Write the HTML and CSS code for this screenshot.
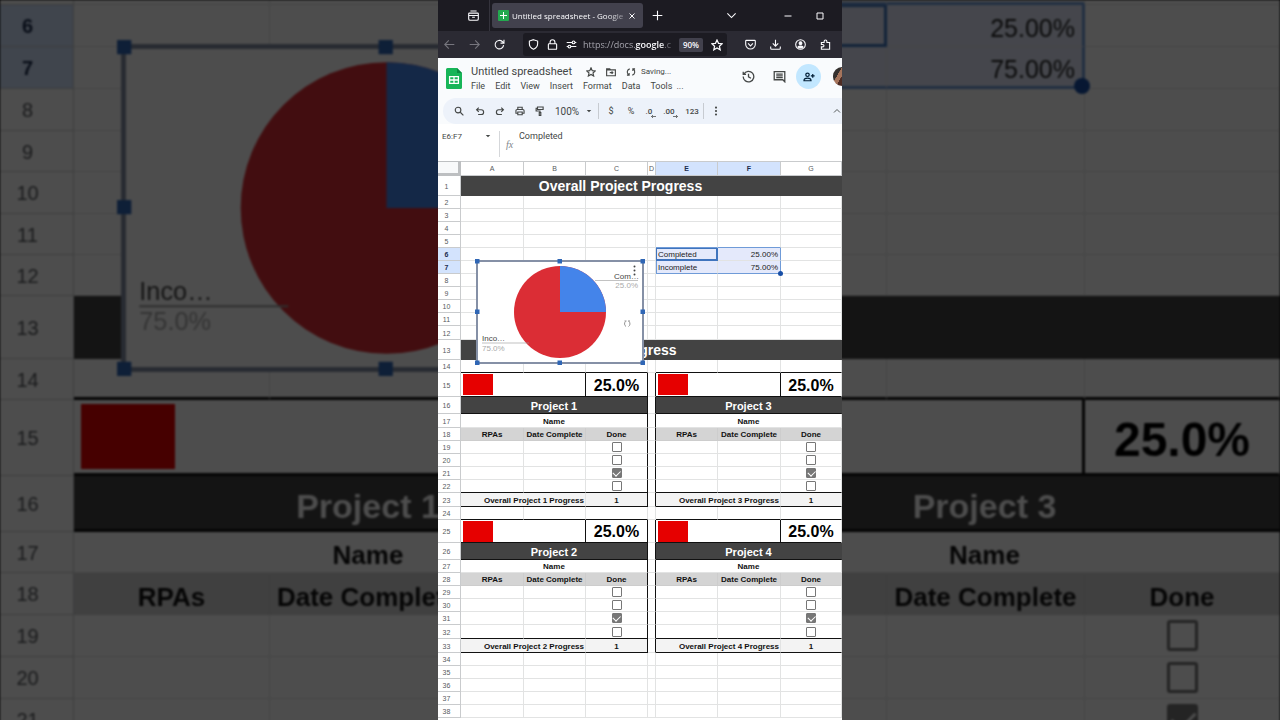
FILE: index.html
```html
<!DOCTYPE html>
<html lang="en">
<head>
<meta charset="utf-8">
<meta name="viewport" content="width=device-width, initial-scale=1">
<title>Untitled spreadsheet - Google Sheets</title>
<link rel="stylesheet" href="styles.css">
</head>
<body>
<svg class="defs" aria-hidden="true">
  <symbol id="i-archive" viewBox="0 0 16 16"><path d="M3.5 1.500h9M2 4.500h12a1 1 0 0 1 1 1V13a2 2 0 0 1-2 2H3a2 2 0 0 1-2-2V5.500a1 1 0 0 1 1-1zM1 8h14M6 10.500h4"/></symbol>
  <symbol id="i-close" viewBox="0 0 16 16"><path d="M3 3l10 10M13 3L3 13"/></symbol>
  <symbol id="i-plus" viewBox="0 0 16 16"><path d="M8 1v14M1 8h14"/></symbol>
  <symbol id="i-down" viewBox="0 0 16 16"><path d="M2 5l6 6 6-6"/></symbol>
  <symbol id="i-up" viewBox="0 0 16 16"><path d="M2 11l6-6 6 6"/></symbol>
  <symbol id="i-min" viewBox="0 0 16 16"><path d="M1 8h14"/></symbol>
  <symbol id="i-max" viewBox="0 0 16 16"><path d="M2 2h12v12H2z"/></symbol>
  <symbol id="i-back" viewBox="0 0 16 16"><path d="M15 8H1M7 2L1 8l6 6"/></symbol>
  <symbol id="i-fwd" viewBox="0 0 16 16"><path d="M1 8h14M9 2l6 6-6 6"/></symbol>
  <symbol id="i-reload" viewBox="0 0 16 16"><path d="M14 9a6.200 6.200 0 1 1-2-5.400L14 5.500M14.500 1v5h-5"/></symbol>
  <symbol id="i-shield" viewBox="0 0 16 16"><path d="M8 1l6 2v4c0 4-2.500 6.500-6 8-3.500-1.500-6-4-6-8V3z"/></symbol>
  <symbol id="i-lock" viewBox="0 0 16 16"><path d="M3 7h10a1 1 0 0 1 1 1v6a1 1 0 0 1-1 1H3a1 1 0 0 1-1-1V8a1 1 0 0 1 1-1zM4.500 7V4.500a3.500 3.500 0 0 1 7 0V7"/></symbol>
  <symbol id="i-perm" viewBox="0 0 16 16"><path d="M1 5h8M13 5h2M1 11h2M7 11h8"/><circle cx="11" cy="5" r="2"/><circle cx="5" cy="11" r="2"/></symbol>
  <symbol id="i-star" viewBox="0 0 16 16"><path d="M8 1.300l2 4.500 4.900.500-3.700 3.300 1.100 4.900L8 12l-4.300 2.500 1.100-4.900L1.100 6.300 6 5.800z"/></symbol>
  <symbol id="i-pocket" viewBox="0 0 16 16"><path d="M2 2h12a1 1 0 0 1 1 1v4.500a7 7 0 0 1-14 0V3a1 1 0 0 1 1-1zM4.500 6.500L8 10l3.500-3.500"/></symbol>
  <symbol id="i-download" viewBox="0 0 16 16"><path d="M8 1v9M4 6.500L8 10.500l4-4M1 11v2.500A1.500 1.500 0 0 0 2.500 15h11a1.500 1.500 0 0 0 1.500-1.500V11"/></symbol>
  <symbol id="i-account" viewBox="0 0 16 16"><circle cx="8" cy="8" r="7"/><circle cx="8" cy="6" r="2" fill="currentColor"/><path fill="currentColor" d="M4.500 11.500c1-1.600 6-1.600 7 0C10 13.500 6 13.500 4.500 11.500z"/></symbol>
  <symbol id="i-puzzle" viewBox="0 0 16 16"><path d="M2 5h4V3.500a2 2 0 0 1 4 0V5h4v10H2v-3.500h2a1.500 1.500 0 0 0 0-3.500H2z"/></symbol>
  <symbol id="i-sheets" viewBox="0 0 16 21"><path fill="#17b558" stroke="none" d="M1.500 0H11l5 5v14.500a1.500 1.500 0 0 1-1.500 1.500h-13A1.500 1.500 0 0 1 0 19.500v-18A1.500 1.500 0 0 1 1.500 0z"/><path fill="#0b8a42" stroke="none" d="M11 0l5 5h-5z"/><path stroke="#fff" fill="none" stroke-width="1.300" d="M3.600 8.600h8.800v6.800H3.600zM3.600 12h8.800M8 8.600v6.800"/></symbol>
  <symbol id="i-folder" viewBox="0 0 16 16"><path d="M1 3h5l1.500 1.500H15V14H1zM1 4.500h7M6 9h5M9 7l2 2-2 2"/></symbol>
  <symbol id="i-sync" viewBox="0 0 16 16"><path d="M6 3a5.500 5.500 0 0 0-2 9.500M1.500 13H5V9.500M10 13a5.500 5.500 0 0 0 2-9.500M14.500 3H11v3.500"/></symbol>
  <symbol id="i-history" viewBox="0 0 16 16"><path d="M2.300 5A6.500 6.500 0 1 1 1.500 8M1.500 2v3.500H5M8 4.500V8.500l3 1.700"/></symbol>
  <symbol id="i-comment" viewBox="0 0 16 16"><path d="M1.500 2h13v12.500L12 12H1.500zM4 5h8M4 7.200h8M4 9.400h8"/></symbol>
  <symbol id="i-share" viewBox="0 0 16 16"><circle cx="6" cy="5" r="2.300"/><path d="M1.300 13c0-4.500 9.400-4.500 9.400 0zM13 4v5M10.500 6.500h5"/></symbol>
  <symbol id="i-search" viewBox="0 0 16 16"><circle cx="6.500" cy="6.500" r="4.500"/><path d="M10 10l5 5"/></symbol>
  <symbol id="i-undo" viewBox="0 0 16 16"><path d="M6 2.500L2.500 6 6 9.500M2.500 6H10a3.800 3.800 0 0 1 0 7.600H5"/></symbol>
  <symbol id="i-redo" viewBox="0 0 16 16"><path d="M10 2.500L13.500 6 10 9.500M13.500 6H6a3.800 3.800 0 0 0 0 7.600h5"/></symbol>
  <symbol id="i-print" viewBox="0 0 16 16"><path d="M4.500 5.500V2h7v3.500M4.500 11.500h-3v-4a2 2 0 0 1 2-2h9a2 2 0 0 1 2 2v4h-3M4.500 9.500h7V14h-7z"/></symbol>
  <symbol id="i-paint" viewBox="0 0 16 16"><path d="M4 1.500h9v4H4zM4 3.500H1.800V8H8v2.500M6.800 10.500h2.500V15H6.800z"/></symbol>
  <symbol id="i-caret" viewBox="0 0 16 16"><path fill="currentColor" stroke="none" d="M2 5h12l-6 6z"/></symbol>
  <symbol id="i-more" viewBox="0 0 16 16"><g fill="currentColor" stroke="none"><circle cx="8" cy="2.500" r="1.700"/><circle cx="8" cy="8" r="1.700"/><circle cx="8" cy="13.500" r="1.700"/></g></symbol>
  <symbol id="chart" viewBox="0 0 170 106">
    <rect x="2" y="2" width="166" height="102" fill="#fff" stroke="#8590a6" shape-rendering="crispEdges"/>
    <circle cx="85" cy="53" r="46" fill="#db2d35"/>
    <path d="M85 53V7a46 46 0 0 1 46 46z" fill="#4484ea"/>
    <g stroke="#999" fill="none" stroke-width=".6"><path d="M120 21.500h43M7 84h47"/></g>
    <g font-family="'Liberation Sans', Arial, sans-serif" font-size="8">
      <text x="139" y="19.500" fill="#444">Com…</text><text x="163" y="29" fill="#aaa" text-anchor="end">25.0%</text>
      <text x="7" y="82" fill="#444">Inco…</text><text x="7" y="91.500" fill="#aaa">75.0%</text>
    </g>
    <g fill="#444"><circle cx="159.500" cy="7.500" r="1"/><circle cx="159.500" cy="11.500" r="1"/><circle cx="159.500" cy="15.500" r="1"/></g>
    <path d="M151 67.500a3.200 3.200 0 0 1-.5-5M153.500 67.500a3.200 3.200 0 0 0 .5-5M149.500 62h2M153 62h2" fill="none" stroke="#777" stroke-width=".8"/>
    <path fill="#2f66b5" d="M0 0h4.500v4.500H0zM82.500 0H87v4.500h-4.500zM165.500 0h4.500v4.500h-4.500zM0 50.500h4.500V55H0zM165.500 50.500h4.500V55h-4.500zM0 101.500h4.500v4.500H0zM82.500 101.500H87v4.500h-4.500zM165.500 101.500h4.500v4.500h-4.500z"/>
  </symbol>
</svg>

<div class="stage">
  <div class="backdrop" aria-hidden="true">
    <div class="sheet sheet-large">
      <table class="grid" data-first="5" data-last="21" data-scale="large"></table>
      <svg class="chart"><use href="#chart"/></svg>
    </div>
  </div>

  <main class="phone">
    <div class="tabs">
      <button class="icon tabs-archive" aria-label="Recent browsing"><svg><use href="#i-archive"/></svg></button>
      <div class="tab">
        <span class="favicon"></span>
        <span class="tab-title">Untitled spreadsheet - Google</span>
        <button class="icon small" aria-label="Close tab"><svg><use href="#i-close"/></svg></button>
      </div>
      <button class="icon" aria-label="New tab"><svg><use href="#i-plus"/></svg></button>
      <div class="window-buttons">
        <button class="icon list-tabs" aria-label="List all tabs"><svg><use href="#i-down"/></svg></button>
        <button class="icon small" aria-label="Minimize"><svg><use href="#i-min"/></svg></button>
        <button class="icon small" aria-label="Maximize"><svg><use href="#i-max"/></svg></button>
      </div>
    </div>

    <div class="nav">
      <button class="icon dim" aria-label="Back"><svg><use href="#i-back"/></svg></button>
      <button class="icon dim" aria-label="Forward"><svg><use href="#i-fwd"/></svg></button>
      <button class="icon" aria-label="Reload"><svg><use href="#i-reload"/></svg></button>
      <div class="address">
        <svg><use href="#i-shield"/></svg>
        <svg><use href="#i-lock"/></svg>
        <svg><use href="#i-perm"/></svg>
        <span class="url">https://docs.<b>google</b>.c</span>
        <button class="zoom-level">90%</button>
        <svg class="star"><use href="#i-star"/></svg>
      </div>
      <div class="nav-tools">
        <button class="icon" aria-label="Pocket"><svg><use href="#i-pocket"/></svg></button>
        <button class="icon" aria-label="Downloads"><svg><use href="#i-download"/></svg></button>
        <button class="icon" aria-label="Account"><svg><use href="#i-account"/></svg></button>
        <button class="icon" aria-label="Extensions"><svg><use href="#i-puzzle"/></svg></button>
      </div>
    </div>

    <header class="doc">
      <svg class="doc-logo" viewBox="0 0 16 21"><use href="#i-sheets"/></svg>
      <div class="doc-info">
        <div class="doc-title">
          <h1>Untitled spreadsheet</h1>
          <svg><use href="#i-star"/></svg>
          <svg><use href="#i-folder"/></svg>
          <svg><use href="#i-sync"/></svg>
          <span>Saving...</span>
        </div>
        <nav class="menu">
          <button>File</button><button>Edit</button><button>View</button><button>Insert</button><button>Format</button><button>Data</button><button>Tools</button><button class="menu-more">...</button>
        </nav>
      </div>
      <div class="doc-actions">
        <button class="icon" aria-label="Version history"><svg><use href="#i-history"/></svg></button>
        <button class="icon" aria-label="Comments"><svg><use href="#i-comment"/></svg></button>
        <button class="share" aria-label="Share"><svg><use href="#i-share"/></svg></button>
        <span class="avatar"></span>
      </div>
    </header>

    <div class="toolbar">
      <button aria-label="Search" class="search"><svg><use href="#i-search"/></svg></button>
      <button aria-label="Undo"><svg><use href="#i-undo"/></svg></button>
      <button aria-label="Redo"><svg><use href="#i-redo"/></svg></button>
      <button aria-label="Print"><svg><use href="#i-print"/></svg></button>
      <button aria-label="Paint format"><svg><use href="#i-paint"/></svg></button>
      <button class="zoom-menu">100% <svg class="caret"><use href="#i-caret"/></svg></button>
      <button>$</button>
      <button>%</button>
      <button class="decimals">.0<svg viewBox="0 0 8 6"><path d="M8 3H2M4 1L2 3l2 2"/></svg></button>
      <button class="decimals">.00<svg viewBox="0 0 8 6"><path d="M0 3h6M4 1l2 2-2 2"/></svg></button>
      <button class="formats">123</button>
      <button class="more" aria-label="More"><svg><use href="#i-more"/></svg></button>
      <button class="collapse" aria-label="Hide menus"><svg><use href="#i-up"/></svg></button>
    </div>

    <div class="formula">
      <button class="name-box">E6:F7 <svg class="caret"><use href="#i-caret"/></svg></button>
      <span class="fx">fx</span>
      <input type="text" value="Completed" aria-label="Formula">
    </div>

    <div class="sheet">
      <table class="grid" data-first="1" data-last="38" data-scale="small" data-header></table>
      <svg class="chart" role="img" aria-label="Completed 25.0%, Incomplete 75.0%"><use href="#chart"/></svg>
    </div>
  </main>
</div>
<script src="app.js"></script>
</body>
</html>
```
FILE: styles.css
```css
* { box-sizing: border-box; }
body { margin: 0; background: #000; font-family: Roboto, "Liberation Sans", sans-serif; }
button, input { font: inherit; color: inherit; border: 0; padding: 0; margin: 0; background: none; }
svg { fill: none; stroke: currentColor; stroke-width: 1.6; flex: none; }
h1 { margin: 0; font-weight: 400; }
.defs { position: absolute; width: 0; height: 0; }

.stage { display: grid; height: 100vh; overflow: hidden; background: #000; }
.backdrop, .phone { grid-area: 1 / 1; min-height: 0; overflow: hidden; }
.backdrop .sheet { opacity: .3; filter: blur(1px); }
.phone {
  position: relative; justify-self: center; height: 100vh; aspect-ratio: 101 / 180;
  display: flex; flex-direction: column; background: linear-gradient(#f9fbfd 124px, #fff 124px);
}

/* Browser chrome */
.icon { display: grid; place-items: center; width: 20px; height: 20px; }
.icon svg { width: 11px; height: 11px; }
.icon.small svg { width: 8px; height: 8px; stroke-width: 2; }
.tabs {
  flex: none; display: flex; align-items: center; height: 31px;
  background: #1c1b22; color: #fbfbfe; font: 8px "Open Sans", sans-serif;
}
.tabs-archive { width: 52px; height: 31px; padding-left: 20px; border-right: 1px solid #34333c; }
.tab {
  display: flex; align-items: center; width: 151px; height: 25px; margin: 0 4px 0 2px;
  padding-left: 6px; border-radius: 3px; background: #42414d;
}
.favicon {
  width: 11px; height: 11px; margin-right: 3px; border-radius: 1px;
  background:
    linear-gradient(#fff, #fff) center / 7px 1px no-repeat,
    linear-gradient(#fff, #fff) center / 1px 7px no-repeat, #23a94f;
}
.tab-title {
  flex: 1; overflow: hidden; white-space: nowrap;
  mask-image: linear-gradient(90deg, #000 85%, #0006);
}
.tab .icon { width: 18px; margin-right: 2px; }
.window-buttons { display: flex; margin-left: auto; padding-right: 12px; gap: 12px; }
.list-tabs { margin-right: 25px; }

.nav {
  flex: none; display: flex; align-items: center; height: 27px; gap: 5px; padding-left: 1px;
  background: #2b2a33; color: #fbfbfe; font: 9px "Open Sans", sans-serif;
}
.nav .dim { color: #77767e; }
.address {
  display: flex; align-items: center; gap: 8px; width: 204px; height: 23px; margin-left: 9px;
  padding-left: 5px; border-radius: 3px; background: #1c1b22;
}
.address svg { width: 11px; height: 11px; }
.url {
  flex: 1; margin: 0 -3px 0 -2px; overflow: hidden; white-space: nowrap; color: #a5a4ad;
  mask-image: linear-gradient(90deg, #000 85%, #0004);
}
.url b { font-weight: 600; color: #fbfbfe; }
.zoom-level { width: 24px; height: 14px; border-radius: 2px; background: #42414d; font-size: 8px; font-weight: 600; }
.address .star { width: 12px; height: 12px; margin-right: 4px; }
.nav-tools { display: flex; gap: 5px; margin-left: auto; padding-right: 7px; }

/* Document header */
.doc { flex: none; display: flex; height: 40px; padding: 6px 0 0 8px; background: #f9fbfd; color: #444746; }
.doc-logo { width: 16px; height: 21px; margin-top: 4px; }
.doc-info { margin-left: 9px; }
.doc-title { display: flex; align-items: center; gap: 10px; height: 15px; font-size: 8px; }
.doc-title h1 { margin-right: 4px; font-size: 11px; line-height: 15px; white-space: nowrap; }
.doc-title svg { width: 10px; height: 10px; stroke-width: 1.8; }
.doc-title span { margin-left: -5px; }
.menu { display: flex; gap: 10px; height: 15px; font-size: 9px; line-height: 15px; }
.menu-more { margin-left: -6px; }
.doc-actions { display: flex; align-items: center; height: 25px; margin-left: auto; }
.doc-actions .icon { margin-right: 11px; }
.doc-actions .icon svg { width: 13px; height: 13px; }
.share { display: grid; place-items: center; width: 25px; height: 25px; margin-left: -4px; border-radius: 50%; background: #c2e7ff; color: #001d35; }
.share svg { width: 12px; height: 12px; }
.avatar {
  width: 9px; height: 19px; margin-left: 12px; border-radius: 10px 0 0 10px;
  background: linear-gradient(120deg, #34302e 45%, #a5745c 46% 70%, #4e2c24 71%);
}

/* Toolbar */
.toolbar {
  flex: none; display: flex; align-items: center; height: 26px; margin-left: 5px; padding-left: 6px;
  border-radius: 13px 0 0 13px; background: #edf2fa; color: #444746; font-size: 9px;
}
.toolbar button { display: flex; align-items: center; justify-content: center; flex: none; width: 20px; height: 16px; }
.toolbar svg { width: 10px; height: 10px; stroke-width: 1.8; }
.toolbar .search { margin-right: 1px; }
.toolbar .zoom-menu { width: 46px; margin: 0 2px 0 3px; padding-right: 4px; gap: 7px; font-size: 10px; border-right: 1px solid #c7cbd1; }
.toolbar .caret, .formula .caret { width: 6px; height: 6px; }
.toolbar .decimals { font-size: 8px; font-weight: 500; }
.toolbar .decimals svg { align-self: flex-end; width: 6px; height: 5px; margin-left: -2px; stroke-width: 1; }
.toolbar .formats { width: 23px; font-size: 8px; font-weight: 500; border-right: 1px solid #c7cbd1; }
.toolbar .more { width: 24px; }
.toolbar .collapse { margin-left: auto; width: 10px; }
.toolbar .collapse svg { width: 8px; height: 8px; }

.formula { flex: none; display: flex; height: 37px; padding-top: 7px; background: #fff; color: #444746; font-size: 9px; }
.name-box { display: flex; align-items: center; justify-content: space-between; width: 53px; height: 10px; padding-left: 4px; font-size: 8px; }
.fx { width: 20px; height: 26px; margin: 0 0 0 8px; padding: 8px 0 0 6px; border-left: 1px solid #d5d7da; font: italic 10px "Liberation Serif", serif; color: #80868b; }
.formula input { flex: 1; min-width: 0; height: 10px; }

/* Spreadsheet */
.sheet {
  --line: 1px; --rule: 1px; --text: 8px; --num: 7px; --nudge: 5px; --pad: 2px; --drop: 2px;
  --title: 14px; --project: 11px; --percent: 16px; --box: 10px; --dot: 5px;
  position: relative; flex: none; font-family: "Liberation Sans", Arial, sans-serif;
}
.sheet-large {
  --rule: 3px; --text: 25px; --num: 20px; --nudge: 18px; --pad: 7px; --drop: 6px;
  --title: 44px; --project: 34px; --percent: 48px; --box: 31px; --dot: 16px;
}
.grid { width: 100%; table-layout: fixed; border-collapse: separate; border-spacing: 0; background: #fff; color: #222; font-size: var(--text); line-height: 1; }
.grid th, .grid td {
  padding: 0; overflow: hidden; white-space: nowrap; text-align: center; vertical-align: middle;
  border: 0 solid #e2e3e3; border-width: 0 var(--line) var(--line) 0;
}
.grid td { padding-top: var(--drop); }
.grid td.flush { padding-top: 0; }
.grid th { font-size: var(--num); font-weight: 400; color: #575a5e; border-color: #c9cbcd; }
.grid tbody th { padding: 1px var(--nudge) 0 0; }
.grid th.picked { background: #d3e3fd; color: #1b2c4d; font-weight: 700; }
.grid .corner { border: 0 solid #bdbfc1; border-width: 1px 3px 3px 0; background: #f8f9fa; }
.grid thead th:not(.corner) { border-top: 1px solid #c9cbcd; }
.grid td.bar { background: #434343; border-color: #434343; color: #fff; font-weight: 700; font-size: var(--project); }
.grid td.title { padding-top: 0; font-size: var(--title); }
.grid td.strong { font-weight: 700; color: #111; }
.sheet-large td.strong { font-size: 26px; }
.grid td.percent { font-size: var(--percent); font-weight: 700; color: #000; }
.grid td.label { background: #d4d4d4; border-color: #cdcdcd; }
.grid td.total { background: #f3f3f3; }
.grid td.end { text-align: right; padding-right: 1px; }
.grid td.edge { border-right: var(--rule) solid #111; }
.grid tr.ruled td:not(.gap) { border-bottom: var(--rule) solid #111; }
.meter { padding: 0 var(--pad); }
.meter div { background: #e60000; }
.grid input {
  appearance: none; display: block; width: var(--box); height: var(--box); margin: 0 auto;
  border: calc(var(--box) / 10) solid #777; border-radius: calc(var(--box) / 10);
}
.grid input:checked { background: #777; position: relative; }
.grid input:checked::after {
  content: ""; position: absolute; left: 10%; top: 15%; width: 80%; height: 45%;
  border: solid #fff; border-width: 0 0 calc(var(--box) / 10) calc(var(--box) / 10); rotate: -45deg;
}
.grid td.picked { position: relative; overflow: visible; background: #e4e9fb; padding: var(--drop) var(--pad) 0; text-align: right; }
.grid td.first { text-align: left; }
.grid td.active { box-shadow: inset 0 0 0 1px #3f74bd; border-color: #3f74bd; }
.sheet-large td.active { box-shadow: inset 0 0 0 2px #3f74bd; }
.grid td.sel-left { box-shadow: inset 1px 0 #6f9bd8; }
.grid td.sel-right { border-right: var(--rule) solid #6f9bd8; }
.grid td.sel-bottom { border-bottom: var(--rule) solid #6f9bd8; }
.grid td.handle::after {
  content: ""; position: absolute; z-index: 1; width: var(--dot); height: var(--dot);
  right: calc(var(--dot) / -2); bottom: calc(var(--dot) / -2); border-radius: 50%; background: #174ea6;
}
.chart { position: absolute; left: 37px; top: 98px; width: 170px; height: 106px; stroke: none; }
.sheet-large .chart { left: 117px; top: 40px; width: 539px; height: 336px; }
```
FILE: app.js
```js
const scales = {
  small: {
    columns: [23, 63, 62, 62, 8, 62, 63],
    row: 13,
    rows: { 1: 20, 12: 14, 13: 20, 15: 24, 16: 17, 17: 14, 23: 14, 25: 23, 26: 17, 32: 14, 33: 14 },
    meter: 21,
  },
  large: {
    columns: [74, 196, 197, 198, 25, 197, 198],
    row: 42,
    rows: { 5: 5, 9: 41, 11: 41, 12: 41, 13: 63, 14: 41, 15: 76, 16: 56, 17: 41 },
    meter: 65,
  },
};

const td = (text = "", cls = "flush", span = 1) => `<td class="${cls}" colspan="${span}">${text}</td>`;
const blank = (n) => td().repeat(n);
const pair = (side) => side(0, "edge") + td("", "gap edge flush") + side(1, "");

function cells(n, scale) {
  if (n === 1) return td("Overall Project Progress", "bar title", 6) + td("", "bar");
  if (n === 13) return td("Project Progress", "bar title", 6) + td("", "bar");
  if (n === 5) return blank(4) + td("", "sel-bottom flush").repeat(2) + blank(1);
  if (n === 6) return blank(4) + td("Completed", "picked first active") + td("25.00%", "picked sel-right") + blank(1);
  if (n === 7) return blank(4) + td("Incomplete", "picked first sel-left sel-bottom") + td("75.00%", "picked sel-right sel-bottom handle") + blank(1);
  if (n === 14 || n === 24) return blank(3) + td("", "gap flush") + blank(3);
  if (n < 15 || n > 33) return blank(7);

  const start = n < 24 ? 15 : 25;
  const step = n - start;
  const name = (i) => `Project ${(start === 15 ? 1 : 2) + i * 2}`;
  if (step === 0) {
    const meter = `<div class="meter"><div style="width:25%;height:${scale.meter}px"></div></div>`;
    return pair((i, e) => td(meter, "flush edge", 2) + td("25.0%", "percent " + e));
  }
  if (step === 1) return pair((i, e) => td(name(i), "bar " + e, 3));
  if (step === 2) return pair((i, e) => td("Name", "strong " + e, 3));
  if (step === 3) return pair((i, e) => td("RPAs", "strong label") + td("Date Complete", "strong label") + td("Done", "strong label " + e));
  if (step === 8) return pair((i, e) => td(`Overall ${name(i)} Progress`, "strong total end", 2) + td("1", "strong total " + e));
  const done = step === 6 ? "checked" : "";
  return pair((i, e) => blank(2) + td(`<input type="checkbox" aria-label="${name(i)} row ${n} done" ${done}>`, "flush " + e));
}

for (const table of document.querySelectorAll(".grid")) {
  const scale = scales[table.dataset.scale];
  const ruled = [14, 15, 16, 22, 23, 24, 25, 26, 32, 33];
  let html = "<colgroup>" + scale.columns.map((w) => `<col style="width:${w}px">`).join("") + "<col></colgroup>";
  if ("header" in table.dataset) {
    html += '<thead><tr style="height:15px"><th class="corner"></th>' +
      [..."ABCDEFG"].map((c) => `<th scope="col" class="${"EF".includes(c) ? "picked" : ""}">${c}</th>`).join("") + "</tr></thead>";
  }
  html += "<tbody>";
  for (let n = +table.dataset.first; n <= +table.dataset.last; n++) {
    const height = scale.rows[n] || scale.row;
    const label = height < 10 ? "" : n;
    html += `<tr class="${ruled.includes(n) ? "ruled" : ""}" style="height:${height}px">` +
      `<th scope="row" class="${n === 6 || n === 7 ? "picked" : ""}">${label}</th>${cells(n, scale)}</tr>`;
  }
  table.innerHTML = html + "</tbody>";
}
for (const box of document.querySelectorAll(".backdrop input")) box.tabIndex = -1;
```
